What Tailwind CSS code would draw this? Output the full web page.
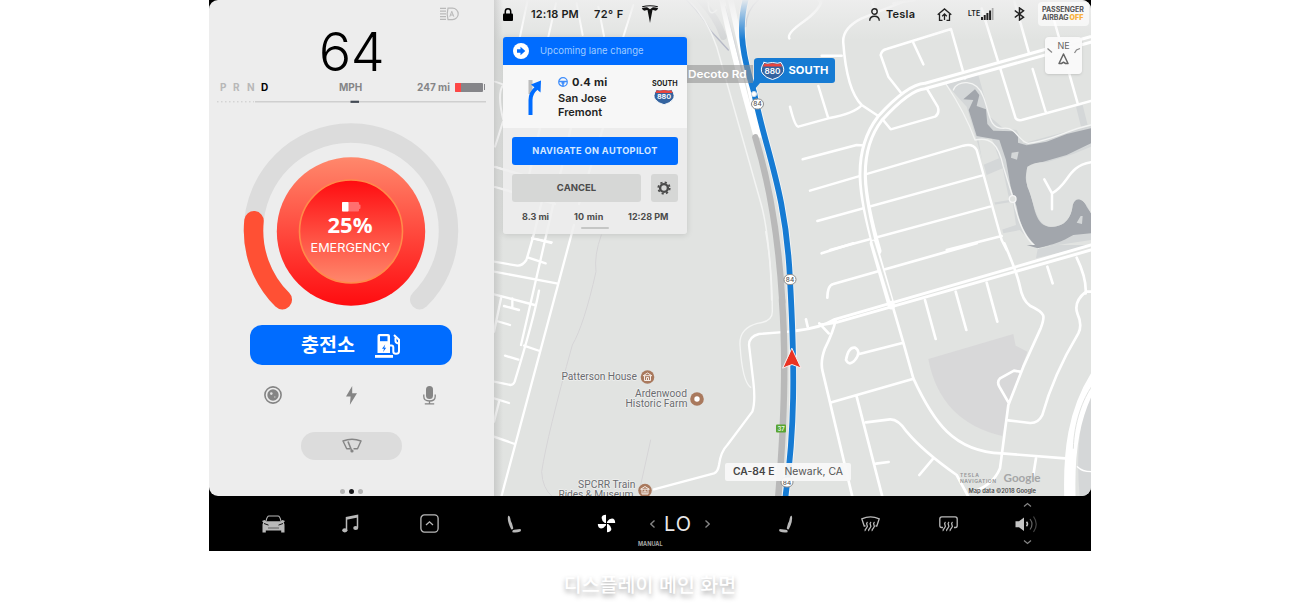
<!DOCTYPE html>
<html lang="ko">
<head>
<meta charset="utf-8">
<title>디스플레이 메인 화면</title>
<script src="https://cdn.jsdelivr.net/npm/@tailwindcss/browser@4"></script>
</head>
<body class="h-[611px] overflow-hidden bg-white font-['Inter','Noto_Sans_CJK_KR',sans-serif]">
<main class="ml-[209px] flex h-[551px] w-[882px] flex-col bg-black">
  <div class="flex h-[496px] overflow-hidden rounded-[9px]">

    <!-- Driver panel -->
    <section class="flex w-[285px] shrink-0 flex-col bg-[#ededed]">
      <div class="flex h-[28px] justify-end pt-[7px] pr-[35px]">
        <svg class="h-[14px] w-[20px]" viewBox="0 0 20 14" fill="none" stroke="#b9b9b9" stroke-width="1.2"><path d="M1 1.3h6M1 4.1h6M1 6.9h6M1 9.7h6M1 12.4h6M9 1.2h4.500a5.700 5.700 0 0 1 0 11.400H9c-1-3.500-1-7.900 0-11.400z"/><path d="M10.800 9.700l2-5.400 2 5.400M11.500 8h2.700" stroke-width="1"/></svg>
      </div>
      <div class="flex h-[46px] items-center justify-center pt-px text-[54px] leading-none font-light text-black"><span class="tracking-[-0.500px]">64</span></div>
      <div class="mt-[5px] flex h-[16px] items-center pl-[11px] text-[10px] font-bold">
        <div class="flex w-[106px] text-[#b8b8b8]"><span class="w-[13px]">P</span><span class="w-[14px]">R</span><span class="w-[14px]">N</span><span class="text-black">D</span></div>
        <span class="w-[91px] text-[#858587] pl-[13px]">MPH</span>
        <span class="w-[38px] text-[#858587] whitespace-nowrap">247 mi</span>
        <div class="flex h-[9px] w-[28px] overflow-hidden rounded-[1px] bg-[#858589]"><div class="w-[6px] bg-[#fe4745]"></div></div>
        <div class="ml-px h-[6px] w-px bg-[#858589]"></div>
      </div>
      <svg class="h-[14px] w-full" viewBox="0 0 285 14"><path d="M8 6.800h37" stroke="#c9c9c9" stroke-dasharray="1.500 2.500"/><path d="M46 6.800h231" stroke="#cfcfcf" stroke-width="1.500"/><path d="M141.500 6.800h8.500" stroke="#444b55" stroke-width="2.200"/></svg>

      <div class="h-[216px]">
        <svg class="h-full w-full" viewBox="209 109 285 216">
          <defs>
            <linearGradient id="disc" x1="0" y1="0" x2="0" y2="1"><stop offset="0" stop-color="#ff886c"/><stop offset="1" stop-color="#ff0c10"/></linearGradient>
            <linearGradient id="core" x1="0" y1="0" x2="0" y2="1"><stop offset="0" stop-color="#ff0c10"/><stop offset="1" stop-color="#ff886c"/></linearGradient>
          </defs>
          <path d="M282.300 299.700A97.500 97.500 0 1 1 419.700 299.700" fill="none" stroke="#dcdcdc" stroke-width="19.500" stroke-linecap="round"/>
          <path d="M282.300 299.700A97.500 97.500 0 0 1 254 220.800" fill="none" stroke="#ff5034" stroke-width="19.500" stroke-linecap="round"/>
          <circle cx="351" cy="231.500" r="74.200" fill="url(#disc)"/>
          <circle cx="351" cy="231.500" r="51.500" fill="url(#core)" stroke="#ff8a4a" stroke-width="1.600"/>
          <rect x="342" y="202" width="17" height="9.500" rx="1" fill="#ff6f6f"/><rect x="358" y="204.500" width="2.500" height="4.500" rx="1" fill="#ff6f6f"/><rect x="342" y="202" width="6.500" height="9.500" rx=".8" fill="#fff"/>
          <text x="327.500" y="233.300" textLength="45" lengthAdjust="spacingAndGlyphs" font-family="Open Sans" font-weight="700" font-size="21.500" fill="#fff">25%</text>
          <text x="310.500" y="251.500" textLength="79.500" lengthAdjust="spacingAndGlyphs" font-family="Inter" font-size="12" fill="#fff">EMERGENCY</text>
        </svg>
      </div>

      <button class="ml-[41px] flex h-[40px] w-[202px] items-center rounded-[12px] bg-[#006cff] pl-[51px] text-white">
        <span class="-mt-[3px] w-[74px] text-left font-['Noto_Sans_CJK_KR',sans-serif] text-[19.500px] leading-none font-bold">충전소</span>
        <svg class="h-[25px] w-[26px]" viewBox="0 0 26 25" fill="none" stroke="#fff"><path d="M2.500 20V3q0-2 2-2h8.500q2 0 2 2v17z" fill="#fff" stroke="none"/><path d="M5 3.200h7.500v5H5z" fill="#006cff" stroke="none"/><path d="M0 22h18v2.800H0z" fill="#fff" stroke="none"/><path d="M10.200 11.500l-3.200 4.300h2l-1 3.500 3.200-4.500H9.300z" fill="#006cff" stroke="none"/><path d="M15 12.500h1.500q1.800 0 1.800 2v4q0 2.300 2.700 2.300 3 0 3-2.600V6.800L19 2" stroke-width="2"/><path d="M20.500 4.500V8q0 2 3 2.500" stroke-width="2"/></svg>
      </button>

      <div class="mt-[16px] flex h-[28px] items-center pl-[55px]">
        <svg class="h-[18px] w-[18px]" viewBox="0 0 18 18"><circle cx="9" cy="9" r="8.100" fill="none" stroke="#858585" stroke-width="1.600"/><circle cx="9" cy="9" r="5.700" fill="#858585"/><circle cx="7.300" cy="7.600" r="1.300" fill="#e0e0e0"/><circle cx="10.800" cy="11" r=".8" fill="#c6c6c6"/></svg>
        <svg class="ml-[64px] h-[19px] w-[11px]" viewBox="0 0 11 19" fill="#858585"><path d="M6.200 0L0 10.600h4.600L3.900 18.700 11 7.300H6.200z"/></svg>
        <svg class="ml-[66px] h-[19px] w-[13px]" viewBox="0 0 13 19" fill="none" stroke="#858585" stroke-width="1.300"><rect x="3" y="0" width="7" height="13" rx="3.500" fill="#858585" stroke="none"/><path d="M.8 8.500v2q0 4.500 5.700 4.500t5.700-4.500v-2M6.500 15v2.800M1.800 17.900h9.400"/></svg>
      </div>
      <div class="mt-[23px] ml-[92px] flex h-[28px] w-[101px] items-center justify-center rounded-full bg-[#dcdcdc]">
        <svg class="h-[16px] w-[20px]" viewBox="0 0 20 16" fill="none" stroke="#858585" stroke-width="1.400" stroke-linejoin="round"><path d="M8 10.800H4.700L1 3Q10-.5 19 3L15.500 10.800h-4"/><path d="M6 3.500l3.600 9" stroke-width="1.600"/><circle cx="10" cy="13" r="1.600" fill="#858585" stroke="none"/></svg>
      </div>
      <div class="mt-[29px] flex items-center justify-center gap-[4px]"><i class="size-[5px] rounded-full bg-[#b4b4b4]"></i><i class="size-[5px] rounded-full bg-[#17171a]"></i><i class="size-[5px] rounded-full bg-[#b4b4b4]"></i></div>
    </section>

    <!-- Map -->
    <section class="relative w-[597px] shrink-0 bg-[#e1e3e1]">
      <svg class="h-[496px] w-[597px]" viewBox="494 0 597 496" fill="none" stroke-linecap="round" stroke-linejoin="round">
        <defs>
          <linearGradient id="topfade" x1="0" y1="0" x2="0" y2="1"><stop offset="0" stop-color="#eee" stop-opacity=".95"/><stop offset="1" stop-color="#eee" stop-opacity="0"/></linearGradient>
          <linearGradient id="edge"><stop offset="0" stop-color="#999" stop-opacity=".32"/><stop offset="1" stop-color="#999" stop-opacity="0"/></linearGradient>
        </defs>
        <!-- north-east: parkland and lagoon -->
        <g transform="translate(790 0) scale(.33333)">
          <path d="M468 252L495 245 565 225 600 350 640 385 680 390 700 430 903 375V720L740 745 690 690 640 700 560 420 530 320zM858 320l20-5 15 60-20 5z" fill="#d4d7d8"/>
          <path d="M565 418l40-3 22 60-48 20zM590 525l48-20 20 95-50 8zM608 615l60-10 10 70-45 15z" fill="#e1e3e1"/>
          <path d="M520 298L555 268 568 285 560 318 588 328 592 372 610 392 670 394 684 410 684 428 710 436 770 425 830 402 903 385V430L830 465 760 485C710 495 700 525 712 555C735 610 730 670 775 680C830 685 845 645 848 615C855 590 880 595 890 620L903 640V700L850 705C815 725 790 735 745 742C715 720 690 680 680 620L662 560 648 480 628 420 560 408 536 330 550 300zM665 458l-2 15 18 6 5-24zM872 648l-12 20 16 4 2-24z" fill="#a2a6ac" fill-rule="evenodd"/>
          <path d="M712 500Q735 485 770 487L850 462 903 440V640C885 600 860 580 848 615C845 655 820 683 780 680C735 672 735 610 712 560Q705 525 712 500z" fill="#dfe1e0"/>
          <path d="M468 252C500 300 530 350 555 420C600 410 625 430 640 500L668 590C680 650 700 720 745 745M490 270C500 240 560 235 580 290C600 340 595 385 640 385C680 380 685 425 715 430C790 420 830 390 903 375" stroke="#f3f4f3" stroke-width="4"/>
          <circle cx="668" cy="597" r="10" fill="#e1e3e1" stroke="#f6f6f6" stroke-width="4"/>
        </g>
        <!-- north-east streets -->
        <g transform="translate(790 0) scale(.33333)" stroke="#fff" stroke-width="7.500">
          <path d="M95 0Q90 30 40 65T-2 115M90 5l-10-10M245 0l5 20M310 10L375 0M95 167h60M340 5L215 55Q155 85 160 130Q170 270 215 315L275 355 302 388 435 350Q450 340 443 320L407 260M215 315Q195 340 115 355L25 380Q15 380 0 320M85 258l30 97M340 287L295 230 272 165Q275 150 290 147L483 87 525 235M370 128l30 65M575 25L677 355Q682 362 695 360L903 303M672 0l48 170M775 0l88 310M728 207l40 132"/>
          <path d="M60 572L520 437Q550 430 560 450L635 720 650 750M38 478L200 435 235 437M82 663L575 527M120 750L600 620M470 750L635 708M763 538l23 42v48M786 580C840 550 830 500 903 487"/>
          <path d="M262 753C215 590 190 460 270 355C320 300 370 260 405 258L903 118" stroke-width="25"/>
          <path d="M258 753C215 590 190 460 270 355C320 300 370 260 405 258L903 118" stroke="#e1e3e1" stroke-width="7"/>
        </g>
        <!-- south-east streets -->
        <g transform="translate(790 245) scale(.33333)" stroke="#fff" stroke-width="8">
          <path d="M415 342L670 267 677 302 712 320 655 480 637 573Q450 530 415 342z" fill="#d8d8d9" stroke="none"/>
          <path d="M870 765Q850 560 903 440V765z" fill="#d5d7d8" stroke="none"/>
          <path d="M710 0l33 10 35-10z" fill="#a2a6ac" stroke="none"/><path d="M743 12L800 0h103l-165 40z" fill="#d4d7d8" stroke="none"/>
          <path d="M95 25L190 -5M112 158Q113 120 130 117L560 -5M643 -5C670 60 680 80 690 125Q697 165 720 182C770 205 765 215 752 250L700 365 655 480 630 670Q610 720 550 740M405 165l32 117M497 140l32 115M590 113l32 117M772 65l16 50M860 38Q890 100 887 145M903 140h-15Q850 170 862 205Q878 240 865 265Q790 390 757 510Q745 535 720 534L655 526M690 380l-18-3-42 23Q620 410 628 425L657 475"/>
          <path d="M304 170L340 293 370 400C430 530 490 620 635 625L825 640M738 640l-8 50M340 293L205 328M195 308Q175 305 168 345Q178 365 195 345Q215 320 195 308zM137 225Q130 260 105 310Q90 350 98 380L187 755M125 472L368 402M200 455L277 755M228 532L300 523Q325 522 350 560Q400 620 500 690L535 755M258 656l38-5M430 640L388 690M48 223l5 22M88 235l28 30"/>
          <path d="M18 257Q90 250 135 223L903 0M90 240L140 232 903 15" stroke-width="9"/>
          <path d="M250 -5L304 182" stroke-width="22"/><path d="M250 -10L303 165" stroke="#e1e3e1" stroke-width="6"/>
          <path d="M840 765C835 620 850 500 920 390" stroke-width="34"/><path d="M850 610C852 530 880 460 905 425" stroke="#e1e3e1" stroke-width="3"/>
          <path d="M862 665q15 15 41 15" stroke-width="4"/>
        </g>
        <!-- western streets -->
        <g transform="translate(494 235) scale(.33333)" stroke="#fff" stroke-width="7">
          <path d="M240 -30L22 785M120 -5Q105 50 97 75Q85 93 70 92L0 80M115 10l58 12M103 68l52 17M0 110L188 145M135 167Q120 250 62 440Q58 450 50 450L0 440M0 178L122 210M55 190v25M30 213l45 12M22 185L0 290M8 258l40 12M90 332l47 16M33 362l40 12M0 490l45 14M15 500L0 560M0 605l62 22"/>
          <path d="M480 763L660 715Q672 710 675 690Q680 650 700 630L775 530Q785 500 778 440L765 330Q765 305 795 297L885 290"/>
          <path d="M815 -10Q835 100 835 230Q835 260 790 265Q735 280 738 330Q745 440 770 457" stroke-width="4" stroke="#f4f5f4"/>
          <path d="M322 0Q300 60 306 110Q270 270 235 330Q160 600 143 710Q145 760 175 785M470 615L440 750" stroke="#d6d5d7" stroke-width="3"/>
        </g>
        <g transform="translate(495 0) scale(.33333)" stroke="#fff" stroke-width="6">
          <path d="M98 0L75 110M183 10L160 110M245 10l18 95M310 20l17 88M415 15L385 110M0 245l24 8M25 360Q5 280 25 255M24 365L0 440M0 500l24 8"/>
        </g>
        <!-- streets under the translucent route card -->
        <path d="M571 127L521 345M495 167l60 17M495 187l60 17M534 234l12-50M532 238l19 5M540 128l-14 60M603 128l-24 76" stroke="#fff" stroke-width="2.300"/>
        <!-- highway corridor -->
        <g transform="translate(680 0) scale(.33333)">
          <path d="M20 0Q70 50 90 90L145 150" stroke="#b6b9c6" stroke-width="4"/><path d="M235 0Q200 30 197 80" stroke="#b9bcc6" stroke-width="4"/>
          <path d="M60 0Q110 50 130 110" stroke="#d2d4d5" stroke-width="20"/>
          <path d="M15 -10Q80 50 110 140L240 600Q270 700 275 900M85 5q0 50 25 25" stroke="#f3f4f3" stroke-width="4.500"/>
          <path d="M125 -10Q150 130 228 405" stroke="#fff" stroke-width="17"/><path d="M150 -10L240 405" stroke="#fff" stroke-width="17"/>
          <path d="M137 20L190 230" stroke="#d6d8dc" stroke-width="3"/>
          <path d="M226 412Q290 620 307 905" stroke="#b9b9b9" stroke-width="19"/>
        </g>
        <path d="M782 300Q788 380 778 500" stroke="#b9b9b9" stroke-width="6.500"/>
        <path d="M746 -2C737 30 744 60 754 92C765 150 786 190 790 280C795 370 795 430 785 500" stroke="#fff" stroke-width="7.500" opacity=".7"/>
        <path d="M746 -2C737 30 744 60 754 92C765 150 786 190 790 280C795 370 795 430 785 500" stroke="#167bd3" stroke-width="5.800"/>
        <path d="M687 65h66v18H687z" fill="#909090" fill-opacity=".57"/>
        <text x="688" y="78" textLength="58.500" lengthAdjust="spacingAndGlyphs" font-family="Inter" font-weight="600" font-size="10.500" fill="#fff">Decoto Rd</text>
        <path d="M758 58h74q3 0 3 3v19q0 3-3 3h-72l-6 7V61q0-3 4-3z" fill="#167bd3"/>
        <g id="shield" transform="translate(761 62)"><path d="M3 .5Q6 2 11.500.5Q17 2 20 .5Q25 8 21 12Q18 16 11.500 17.500Q5 16 2 12Q-2 8 3 .5z" fill="#34639f" stroke="#fff"/><path d="M3.300 1.500Q6 2.500 11.500 1.200Q17 2.500 19.700 1.500L21 4.500H2z" fill="#e9473f"/><text x="3.500" y="11.500" textLength="16" lengthAdjust="spacingAndGlyphs" font-family="Inter" font-weight="600" font-size="7.500" fill="#fff">880</text></g>
        <text x="788.500" y="74" textLength="40" lengthAdjust="spacingAndGlyphs" font-family="Inter" font-weight="700" font-size="10.500" fill="#fff">SOUTH</text>
        <circle cx="754" cy="94" r="2.600" fill="#fff" stroke="#cddcea"/>
        <g fill="#fff" stroke="#8c8c8c"><rect x="751.500" y="99" width="12" height="10" rx="5"/><rect x="784" y="274.500" width="12" height="10" rx="5"/><rect x="781" y="477" width="12" height="10" rx="5"/></g>
        <g font-family="Inter" font-weight="500" font-size="6.500" fill="#555" text-anchor="middle"><text x="757.500" y="106.400">84</text><text x="790" y="282">84</text><text x="787" y="484.500">84</text></g>
        <path d="M792 348.500L801 368 792 364.500 783 368z" fill="#ea3323" stroke="#f8eeee" stroke-width="1"/>
        <rect x="776" y="424.500" width="10" height="8" rx="1" fill="#58a532"/><text x="777.500" y="431" font-family="Inter" font-weight="600" font-size="6" fill="#eaf5e4">37</text>
        <!-- places -->
        <g fill="#a9795d"><circle cx="647.500" cy="377" r="6.800"/><circle cx="697" cy="399" r="6.800"/><circle cx="645" cy="490.500" r="6.800"/></g>
        <circle cx="697" cy="399" r="2.700" fill="#fff"/>
        <g stroke="#f5ece6" stroke-width="1"><path d="M643.500 375.500l4-2.500 4 2.500zM644.500 376v4.500h6V376M646.500 380v-2.500h2v2.500M641 489l4-2.500 4 2.500zM642 489.500v4.500h6v-4.500M644 493.500V491h2v2.500"/></g>
        <g font-family="Roboto" font-size="10.300" fill="#6b6c70" stroke="#eff0ef" stroke-width="1.500" paint-order="stroke">
          <text x="561.500" y="380.300" textLength="75.500">Patterson House</text>
          <text x="635" y="397" textLength="52">Ardenwood</text>
          <text x="625.500" y="407.300" textLength="62">Historic Farm</text>
          <text x="578" y="488.300" textLength="57.500">SPCRR Train</text>
          <text x="558.500" y="498.300" textLength="75">Rides &amp; Museum</text>
        </g>
        <g font-family="Inter" fill="#939496">
          <text x="960" y="477" font-size="5" font-weight="600" textLength="19">TESLA</text><text x="960" y="483" font-size="5" font-weight="600" textLength="36">NAVIGATION</text>
          <text x="1003.500" y="482" font-family="Lato" font-size="12" font-weight="700" fill="#a5a6a7" textLength="37" lengthAdjust="spacingAndGlyphs">Google</text>
          <text x="968.500" y="493" font-size="5.500" font-weight="600" fill="#4c4c4c" textLength="67.500" lengthAdjust="spacingAndGlyphs">Map data ©2018 Google</text>
        </g>
        <path d="M494 0h597v40H494z" fill="url(#topfade)"/><path d="M494 0h9v496h-9z" fill="url(#edge)"/>
        <rect x="725" y="463" width="126" height="18" rx="2" fill="#f8f8f8" fill-opacity=".95"/>
        <text x="733" y="475.300" textLength="41.500" lengthAdjust="spacingAndGlyphs" font-family="Inter" font-weight="600" font-size="9.700" fill="#444">CA-84 E</text>
        <text x="784.500" y="475.300" textLength="58.500" lengthAdjust="spacingAndGlyphs" font-family="Inter" font-size="9.700" fill="#555">Newark, CA</text>
      </svg>

      <!-- Status bar -->
      <header class="absolute inset-x-0 top-0 flex h-[28px] items-center pl-[9px] text-[11px] font-semibold whitespace-nowrap text-[#1c1d20]">
        <svg class="h-[13px] w-[10px]" viewBox="0 0 10 13"><path d="M2.300 6V3.500a2.700 2.700 0 0 1 5.400 0V6" fill="none" stroke="#000" stroke-width="1.500"/><rect y="5.500" width="10" height="7.500" rx="1" /></svg>
        <span class="ml-[18px] w-[48px] tracking-[0.150px]">12:18 PM</span>
        <span class="ml-[15px] w-[31px] tracking-[0.450px]">72° F</span>
        <svg class="ml-[16px] h-[18px] w-[18px]" viewBox="0 0 18 18"><path d="M1 1.200Q9-.8 17 1.200l-.3 1Q9 .5 1.300 2.200zM.8 3.300Q4 2.200 6.500 2.400L9 4.200l2.500-1.800Q14 2.200 17.200 3.300Q16.300 5.600 14.300 5.700Q13 4.900 11.500 5L9 18 6.500 5Q5 4.900 3.700 5.700Q1.700 5.600.8 3.300z" fill="#111"/></svg>
        <svg class="ml-[210px] h-[13px] w-[11px]" viewBox="0 0 11 13" fill="none" stroke="#222" stroke-width="1.400"><circle cx="5.500" cy="3.500" r="2.700"/><path d="M.7 12.700Q1 8.300 5.500 8.300T10.300 12.700"/></svg>
        <span class="ml-[6px] w-[30px] tracking-[0.200px]">Tesla</span>
        <svg class="ml-[21px] h-[13px] w-[15px]" viewBox="0 0 15 13" fill="none" stroke="#222" stroke-width="1.300"><path d="M.7 6.700L7.500.9l6.800 5.800M2.500 6v6.300h3M12.500 6v6.300h-3M7.500 12V6M5.200 8.200L7.500 6l2.300 2.200"/></svg>
        <span class="ml-[16px] w-[13px] text-[7px]">LTE</span>
        <svg class="h-[12px] w-[13px]" viewBox="0 0 13 12"><path d="M0 9h2v3H0zM2.700 7h2v5h-2zM5.400 5h2v7h-2zM8.100 2.500h2V12h-2z" fill="#222"/><path d="M10.800 0h1.700v12h-1.700z" fill="#aaa"/></svg>
        <svg class="ml-[20px] h-[14px] w-[11px]" viewBox="0 0 11 14" fill="none" stroke="#222" stroke-width="1.500"><path d="M.8 3.500l8.700 6.700L5.500 13V1l4 2.800L.8 10.500"/></svg>
        <div class="ml-[13px] flex h-[24px] w-[51px] flex-col justify-center rounded-[4px] bg-white/65 pl-[4px] text-[7px] leading-[8px] font-bold text-[#555]"><span>PASSENGER</span><span>AIRBAG<b class="pl-px text-[#f9b13c]">OFF</b></span></div>
      </header>
      <div class="absolute top-[37px] right-[9px] flex h-[37px] w-[37px] flex-col items-center rounded-[4px] bg-[#fafafa]/95 pt-[3px] text-[9px] leading-[11px] text-[#666] shadow-sm">
        NE
        <svg class="h-[17px] w-[37px] overflow-visible" viewBox="0 0 37 17" fill="none" stroke="#666"><path d="M18.500 3l4.500 9.500h-2.500l-2-1.300-2 1.300H14z" stroke-width="1.500" stroke-linejoin="round"/><path d="M2.500-2.500l4.500 4M29.500 2l2-3 3.500-1.500" stroke="#8a8a8a" stroke-width="1.300"/></svg>
      </div>

      <!-- Route card -->
      <aside class="absolute top-[37px] left-[9px] flex h-[196.500px] w-[184px] flex-col overflow-hidden rounded-[3px] text-[#1e1f22] shadow-[0_1px_6px_rgba(0,0,0,.13)]">
        <div class="flex h-[27.500px] items-center bg-[#006cff] pl-[10px] text-[9.500px] text-[#9fcbff]">
          <svg class="mr-[11px] h-[16px] w-[16px]" viewBox="0 0 16 16"><circle cx="8" cy="8" r="8" fill="#fff"/><path d="M4 6.200h3.500V3.800L12.300 8 7.500 12.200V9.800H4z" fill="#006cff"/></svg>
          <span class="whitespace-nowrap">Upcoming lane change</span>
        </div>
        <div class="flex h-[63px] bg-[#f7f7f7]">
          <svg class="mt-[13px] ml-[24px] h-[40px] w-[15px]" viewBox="0 0 15 40" fill="none"><path d="M3.500 2v14" stroke="#bcbcbc" stroke-width="4"/><path d="M3.500 37V22Q3.500 15 9.500 10" stroke="#006cff" stroke-width="4"/><path d="M4 6.500L14 2.500 13.500 14.500z" fill="#006cff"/></svg>
          <div class="ml-[16px] w-[94px] pt-[11px] text-[11px] leading-[13.500px] font-semibold">
            <div class="mb-[3px] flex items-center"><svg class="mr-[4px] h-[10px] w-[10px]" viewBox="0 0 10 10" fill="none" stroke="#3e8dfb"><circle cx="5" cy="5" r="4.300" stroke-width="1.200"/><path d="M1 4.500h8M5 5v4M3.500 6h3" stroke-width="1.600"/></svg><span class="font-bold tracking-[0.300px]">0.4 mi</span></div>
            <div>San Jose</div><div>Fremont</div>
          </div>
          <div class="flex flex-col items-center pt-[15px] text-[7.200px] leading-[8px] font-bold"><span>SOUTH</span><svg class="mt-px h-[17px] w-[23px]" viewBox="0 0 24 19"><use href="#shield" x="-761" y="-62"/></svg></div>
        </div>
        <div class="flex grow flex-col bg-[#ededed]/85 px-[9px] pt-[9.500px] text-[9.500px] font-bold text-[#4b4b4b]">
          <button class="h-[27.500px] rounded-[3px] bg-[#006cff] text-[9.200px] tracking-[0.350px] text-[#d5e8ff]">NAVIGATE ON AUTOPILOT</button>
          <div class="mt-[9.500px] flex h-[27.500px] justify-between">
            <button class="w-[129px] rounded-[3px] bg-[#d6d7d6]">CANCEL</button>
            <button class="flex w-[27.500px] items-center justify-center rounded-[3px] bg-[#d6d7d6]"><svg class="h-[14px] w-[14px]" viewBox="0 0 14 14" fill="none" stroke="#4b4b4b"><circle cx="7" cy="7" r="3.900" stroke-width="2.400"/><circle cx="7" cy="7" r="5.700" stroke-width="1.800" stroke-dasharray="2.200 2.277"/></svg></button>
          </div>
          <div class="mt-[9px] flex h-[13px] items-center pl-[10px] text-[9px] whitespace-nowrap"><span class="w-[52px]">8.3 mi</span><span class="w-[54px] tracking-[0.200px]">10 min</span><span>12:28 PM</span></div>
          <div class="mx-auto mt-[3px] h-[2.500px] w-[28px] rounded-full bg-[#c5c6c5]"></div>
        </div>
      </aside>
    </section>
  </div>

  <!-- Dock -->
  <nav class="flex h-[55px] items-center pl-[53px] text-[#b9b9b9]">
    <svg class="h-[18px] w-[23px]" viewBox="0 0 23 18" fill="currentColor"><path d="M4 6.200Q5 1 7 1h9q2 0 3 5.200" fill="none" stroke="currentColor" stroke-width="1.100"/><path d="M0 6l2.500-1 1.800 1.300h14.400L20.500 5 23 6l-1.300 1.600Q22.800 9 22.500 11v6.500h-3.300V15.500H3.800v2H.5V11Q.2 9 1.300 7.600z"/><path d="M2 8.500l4.500 1.600M21 8.500l-4.500 1.600" stroke="#000" stroke-width=".9"/><path d="M6 13h11" stroke="#444" stroke-width=".8"/></svg>
    <svg class="ml-[57px] h-[19px] w-[17px]" viewBox="0 0 17 19" fill="none" stroke="currentColor" stroke-width="1.500"><path d="M4.500 16.500V3.500L15.500 1.300v12.500M4.500 5l11-2.200"/><ellipse cx="2.800" cy="16.300" rx="2.600" ry="2.100" fill="currentColor" stroke="none"/><ellipse cx="13.700" cy="14" rx="2.500" ry="2.100" fill="currentColor" stroke="none"/></svg>
    <svg class="ml-[61px] h-[19px] w-[19px]" viewBox="0 0 19 19" fill="none" stroke="currentColor" stroke-width="1.300"><rect x=".9" y=".9" width="17.200" height="17.200" rx="3.500"/><path d="M6 11l3.500-3.200L13 11"/></svg>
    <svg class="ml-[68px] h-[18px] w-[15px]" viewBox="0 0 15 18" fill="currentColor"><path id="seat" d="M1.200.8Q2.500.3 3.200 3Q3.400 5.500 5 8.500L6.300 13.300Q5.800 15 4.200 14.200Q2.200 10.500 1.300 7Q.3 3 1.200.8zM5.500 17.200Q4.800 15.200 7.200 14.800L13.300 14Q14.600 15 13.300 16.500Q10 17.800 5.500 17.200z"/></svg>
    <div class="relative ml-[75px] flex w-[115px] items-center">
      <svg class="h-[19px] w-[19px]" viewBox="0 0 19 19" fill="#fff"><path id="blade" d="M9 .8V9H7.800Q4.700 6.800 4.600 4Q4.800.9 9 .8z"/><use href="#blade" transform="rotate(90 9.500 9.500)"/><use href="#blade" transform="rotate(180 9.500 9.500)"/><use href="#blade" transform="rotate(270 9.500 9.500)"/></svg>
      <svg class="ml-[34px] h-[8px] w-[5px]" viewBox="0 0 5 8" fill="none" stroke="#858585" stroke-width="1.300"><path d="M4.500.5L.8 4l3.700 3.500"/></svg>
      <span class="ml-[9px] w-[31px] text-[20px] leading-none tracking-[1px] text-[#e8e8e8]">LO</span>
      <svg class="ml-[10px] h-[8px] w-[5px]" viewBox="0 0 5 8" fill="none" stroke="#858585" stroke-width="1.300"><path d="M.5.500L4.200 4 .5 7.500"/></svg>
      <span class="absolute top-[26px] left-[41px] text-[5.500px] leading-[8px] font-bold text-[#a9a9a9]">MANUAL</span>
    </div>
    <svg class="ml-[66px] h-[18px] w-[15px]" viewBox="0 0 15 18" fill="currentColor"><use href="#seat" transform="translate(15 0) scale(-1 1)"/></svg>
    <svg class="ml-[68px] h-[16px] w-[19px]" viewBox="0 0 19 16" fill="none" stroke="currentColor" stroke-width="1.300"><path d="M4.500 10H3.200L.8 2.800Q9.500-1 18.200 2.800L15.800 10h-1.300"/><path id="heat" d="M6.500 6q-1.600 1.500-.5 3t-.7 3.200-1 2.800M10 6q-1.600 1.500-.5 3t-.7 3.200-1 2.800M13.500 6q-1.600 1.500-.5 3t-.7 3.200-1 2.800" stroke-width="1.300"/></svg>
    <svg class="ml-[59px] h-[16px] w-[19px]" viewBox="0 0 19 16" fill="none" stroke="currentColor" stroke-width="1.300"><path d="M4 11.500H2.500Q.8 11.500.8 9.500V3Q.8.800 2.800.8h13.400q2 0 2 2.200v6.500q0 2-1.700 2H15"/><use href="#heat"/></svg>
    <svg class="ml-[57px] h-[44px] w-[23px]" viewBox="0 0 23 44" fill="none" stroke="#858585" stroke-width="1.200"><path d="M9 4.500l3.500-3 3.500 3M9 38.500l3.500 3 3.500-3"/><path d="M.5 19.200H4L9 15.500v13.500L4 25.200H.5z" fill="#c4c4c4" stroke="none"/><path d="M11.500 19.800q2 2.200 0 4.500" stroke="#c4c4c4" stroke-width="1.500"/><path d="M15 17q4 5.200 0 10.500" stroke="#666"/><path d="M18.500 14.500q5.500 7.700 0 15.500" stroke="#444"/></svg>
  </nav>
</main>
<p class="mt-[19px] text-center font-['Noto_Sans_CJK_KR',sans-serif] text-[19.500px] leading-[28px] font-medium text-white [text-shadow:0_3px_5px_rgba(0,0,0,0.35)]">디스플레이 메인 화면</p>
</body>
</html>
